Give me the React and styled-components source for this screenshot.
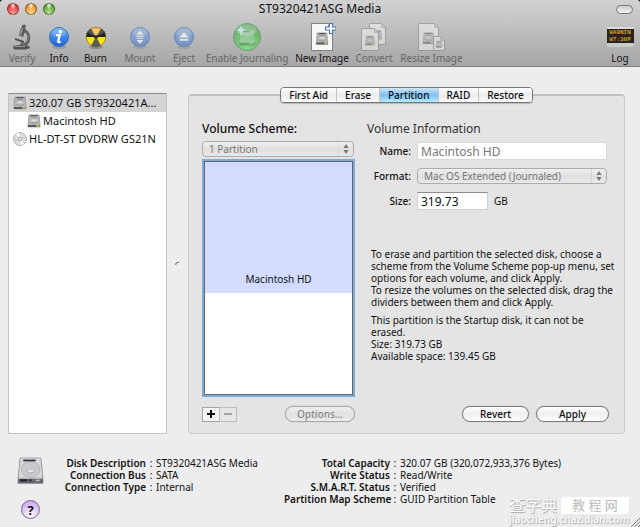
import { useState } from "react";
import styled, { createGlobalStyle, css } from "styled-components";

const TABS = ["First Aid", "Erase", "Partition", "RAID", "Restore"];

const DISK_INFO = [
  ["Disk Description", "ST9320421ASG Media"],
  ["Connection Bus", "SATA"],
  ["Connection Type", "Internal"]
];

const CAPACITY_INFO = [
  ["Total Capacity", "320.07 GB (320,072,933,376 Bytes)"],
  ["Write Status", "Read/Write"],
  ["S.M.A.R.T. Status", "Verified"],
  ["Partition Map Scheme", "GUID Partition Table"]
];

const VerifyIcon = () => (
  <svg width="20" height="26" viewBox="0 0 20 26">
    <path d="M10 1l3-.5 1 2-1 1.5 1 1-3 8-4-1.5 2-8 1-.5z" fill="#5c5c5c" />
    <path d="M10.5 4l-2 7" fill="none" stroke="#b0b0b0" />
    <path d="M13 7c5 3 5 10 0 14" fill="none" stroke="#5c5c5c" strokeWidth="3" />
    <path d="M14 8c3 3 3 8 0 11" fill="none" stroke="#8d8d8d" strokeWidth="0.8" />
    <path d="M3 14l9 3v2l-9-3z" fill="#4f4f4f" />
    <path d="M9 18l5 1-2 4H7z" fill="#6b6b6b" />
    <path d="M1 22l6-1 10 1 1 2-4 1.5H2z" fill="#515151" />
    <path d="M3 22.5h10" stroke="#999" />
  </svg>
);

const Ball = ({ id, top, bottom, children, faded }) => (
  <svg width="22" height="26" viewBox="0 0 22 26" opacity={faded ? 0.65 : 1}>
    <defs>
      <linearGradient id={id} x1="0" y1="0" x2="0" y2="1">
        <stop offset="0" stopColor={top} />
        <stop offset="1" stopColor={bottom} />
      </linearGradient>
    </defs>
    <ellipse cx="11" cy="23" rx="7" ry="2" fill="#0002" />
    <circle cx="11" cy="13" r="9.5" fill={`url(#${id})`} stroke="#3470bd" strokeWidth="1" />
    <ellipse cx="11" cy="8.5" rx="7" ry="4.5" fill="#fff" opacity="0.2" />
    {children}
  </svg>
);

const InfoIcon = () => (
  <Ball id="info" top="#62aef5" bottom="#1f62d4">
    <circle cx="12.4" cy="7.8" r="1.8" fill="#fff" />
    <path d="M8 11.2h3.6l-1.5 6.2c0 1 1.2 1 2.6.2" fill="none" stroke="#fff" strokeWidth="2.2" />
  </Ball>
);

const BurnIcon = () => (
  <svg width="22" height="26" viewBox="0 0 22 26">
    <ellipse cx="11" cy="23" rx="7" ry="2" fill="#0003" />
    <circle cx="11" cy="13" r="10" fill="#f7e414" />
    <path d="M11 13L6 4.3A10 10 0 0 0 1 13z" fill="#222" />
    <path d="M11 13l5-8.7a10 10 0 0 1 5 8.7z" fill="#222" />
    <path d="M11 13l5 8.7a10 10 0 0 1-10 0z" fill="#5c5c5c" />
    <path d="M11 13L6 4.3a10 10 0 0 1 10 0z" fill="#f3ae3c" />
    <circle cx="11" cy="13" r="2" fill="#333" />
    <ellipse cx="11" cy="7.5" rx="8" ry="4" fill="#fff" opacity="0.22" />
    <circle cx="11" cy="13" r="9.7" fill="none" stroke="#645d2b" strokeWidth="0.6" />
  </svg>
);

const MountIcon = () => (
  <Ball id="mount" top="#7fa8dc" bottom="#5480cd" faded>
    <path d="M11 6.5l3.5 4h-7zM11 20l3.5-4h-7zM7.5 11.8h7v1h-7zM7.5 13.8h7v1h-7z" fill="#fff" />
  </Ball>
);

const EjectIcon = () => (
  <Ball id="eject" top="#7fa8dc" bottom="#5480cd" faded>
    <path d="M11 8.5l5 5H6zM6.5 14.8h9v2h-9z" fill="#fff" />
  </Ball>
);

const DriveShape = ({ x = 0, y = 0, s = 1 }) => (
  <g transform={`translate(${x} ${y}) scale(${s})`}>
    <path d="M3 1h20l2 20v4H1v-4z" fill="#c5c5c8" stroke="#8c8c90" strokeWidth="0.8" />
    <path d="M3.5 1.5h19l1.5 18H2z" fill="#d9d9dc" />
    <ellipse cx="13" cy="12" rx="9" ry="7.5" fill="#cacace" stroke="#ababaf" strokeWidth="0.7" />
    <path d="M9 13c2 3 6 3 8 0" fill="#eee" stroke="#999" strokeWidth="0.8" />
    <path d="M6 2.5h12v1.7H6z" fill="#333" />
    <path d="M1 21h24v4.5H1z" fill="#68686f" />
    <path d="M3 22.5h7M12 22.5h2" stroke="#22242c" strokeWidth="2" />
    <path d="M18 22.5h4" stroke="#bbb" strokeWidth="1.5" />
  </g>
);

// at list and toolbar sizes the platter is only a few grey bands
const SmallDrive = ({ x = 0, y = 0, s = 1 }) => (
  <g transform={`translate(${x} ${y}) scale(${s})`}>
    <path d="M2 1h10l1 10v2H1v-2z" fill="#b9b9bc" stroke="#8a8a8c" strokeWidth="0.7" />
    <path d="M3.5 1.8h7" stroke="#444" strokeWidth="1.1" />
    <path d="M4 4.5c2-1.4 4-1.4 6 0M3.5 8.5c2 1.4 5 1.4 7 0" fill="none" stroke="#8f8f92" strokeWidth="0.9" />
    <path d="M4.5 6.4h5" stroke="#e2e2e4" strokeWidth="1.6" />
    <path d="M1 11h12v2H1z" fill="#5a5a5e" />
    <path d="M9.5 11.2h3v1.5h-3z" fill="#d9d541" />
  </g>
);

const DriveIcon = () => (
  <svg width="27" height="27" viewBox="0 0 26 26">
    <DriveShape />
  </svg>
);

const ListDriveIcon = () => (
  <svg width="14" height="14" viewBox="0 0 14 14">
    <SmallDrive />
  </svg>
);

const DiscIcon = () => (
  <svg width="14" height="14" viewBox="0 0 14 14">
    <circle cx="7" cy="7" r="6.5" fill="#dedede" stroke="#a2a2a2" strokeWidth="0.8" />
    <path d="M7 7L3 2l3-1zM7 7l4 5-3 1z" fill="#fff" />
    <path d="M7 7l6-3v3zM7 7l-6 3V7z" fill="#c8ced2" />
    <circle cx="7" cy="7" r="2.2" fill="#aaa" />
    <circle cx="7" cy="7" r="1.1" fill="#fff" />
  </svg>
);

const JournalIcon = () => (
  <svg width="28" height="28" viewBox="0 0 28 28">
    <defs>
      <radialGradient id="journal" cx="0.5" cy="0.85" r="0.8">
        <stop offset="0" stopColor="#83dc80" />
        <stop offset="1" stopColor="#6aab6e" />
      </radialGradient>
    </defs>
    <circle cx="14" cy="14" r="13.5" fill="url(#journal)" stroke="#6c9f70" />
    <g opacity="0.35"><DriveShape x={5.5} y={6} s={0.66} /></g>
    <ellipse cx="14" cy="7" rx="10" ry="6" fill="#fff" opacity="0.2" />
    <path d="M8 1l.7 5.3L14 7l-5.3.7L8 13l-.7-5.3L2 7l5.3-.7z" fill="#e2f8fb" />
    <path d="M5 4l6 6M11 4l-6 6" stroke="#b4e6ee" strokeWidth="0.7" />
  </svg>
);

const Sheet = ({ x, y, w, h, drive }) => (
  <g transform={`translate(${x} ${y})`}>
    <path d={`M.5.5h${w - 5}l4 4v${h - 5}H.5z`} fill="#f8f8f8" stroke="#777" strokeWidth="0.9" />
    <path d={`M${w - 4.5}.5v4h4z`} fill="#ccc" stroke="#888" strokeWidth="0.6" />
    <SmallDrive x={w * 0.5 - 7 * drive} y={h * 0.32} s={drive} />
  </g>
);

const NewImageIcon = () => (
  <svg width="28" height="28" viewBox="0 0 28 28">
    <Sheet x={3} y={0} w={22} h={28} drive={0.95} />
    <path d="M21 0h4v3.5h3v4h-3V11h-4V7.5h-4v-4h4z" fill="#4674b4" />
    <path d="M22 1h2v3.5h3.5v2H24V10h-2V6.500h-4v-2h4z" fill="#fff" />
  </svg>
);

const ConvertIcon = () => (
  <svg width="26" height="28" viewBox="0 0 26 28" opacity="0.5">
    <Sheet x={8} y={0} w={17} h={22} drive={0.7} />
    <Sheet x={0} y={5} w={18} h={23} drive={0.75} />
  </svg>
);

const ResizeIcon = () => (
  <svg width="28" height="28" viewBox="0 0 28 28" opacity="0.5">
    <Sheet x={0} y={0} w={21} h={28} drive={0.9} />
    <Sheet x={15} y={13} w={12} h={15} drive={0.5} />
  </svg>
);

const ArrowsIcon = () => (
  <svg width="6" height="10" viewBox="0 0 6 10">
    <path d="M3 0l2.5 4h-5zM3 10l2.5-4h-5z" fill="#777" />
  </svg>
);

const TOOLS = [
  { label: "Verify", width: 36, icon: <VerifyIcon />, disabled: true },
  { label: "Info", width: 38, icon: <InfoIcon /> },
  { label: "Burn", width: 35, icon: <BurnIcon /> },
  { label: "Mount", width: 54, icon: <MountIcon />, disabled: true },
  { label: "Eject", width: 34, icon: <EjectIcon />, disabled: true },
  { label: "Enable Journaling", width: 92, icon: <JournalIcon />, disabled: true },
  { label: "New Image", width: 58, icon: <NewImageIcon /> },
  { label: "Convert", width: 46, icon: <ConvertIcon />, disabled: true },
  { label: "Resize Image", width: 69, icon: <ResizeIcon />, disabled: true }
];

const PopUp = ({ id, label, value }) => (
  <SelectWrap>
    <Select id={id} aria-label={label} disabled>
      <option>{value}</option>
    </Select>
    <SelectArrows><ArrowsIcon /></SelectArrows>
  </SelectWrap>
);

const Info = ({ rows }) => (
  <InfoList>
    {rows.map(([name, value]) => (
      <InfoRow key={name}>
        <dt>{name}</dt>
        <Colon>:</Colon>
        <dd>{value}</dd>
      </InfoRow>
    ))}
  </InfoList>
);

const App = () => {
  const [tab, setTab] = useState("Partition");
  const [selected, setSelected] = useState(0);
  const [size, setSize] = useState("319.73");

  return (
    <>
      <GlobalStyle />
      <Window>
        <Header>
          <TitleBar>
            <Lights>
              <Light type="button" aria-label="Close" $color="#e0403d" $glow="#ff9b98" />
              <Light type="button" aria-label="Minimize" $color="#e6912f" $glow="#ffdf8d" />
              <Light type="button" aria-label="Zoom" $color="#5fa63b" $glow="#b9e78d" />
            </Lights>
            <Title>ST9320421ASG Media</Title>
            <ToolbarToggle type="button" aria-label="Toolbar" />
          </TitleBar>
          <Toolbar>
            {TOOLS.map((tool) => (
              <Tool key={tool.label} type="button" disabled={tool.disabled} $width={tool.width}>
                <ToolIcon>{tool.icon}</ToolIcon>
                {tool.label}
              </Tool>
            ))}
            <LogTool type="button" $width={40}>
              <ToolIcon>
                <LogScreen><span>WARNIN</span><span>W7:36P</span></LogScreen>
              </ToolIcon>
              Log
            </LogTool>
          </Toolbar>
        </Header>

        <Main>
          <DiskList>
            <li>
              <Disk type="button" $active={selected === 0} onClick={() => setSelected(0)}>
                <ListDriveIcon /><DiskName>320.07 GB ST9320421A...</DiskName>
              </Disk>
            </li>
            <li>
              <Disk type="button" $nested $active={selected === 1} onClick={() => setSelected(1)}>
                <ListDriveIcon /><DiskName>Macintosh HD</DiskName>
              </Disk>
            </li>
            <li>
              <Disk type="button" $active={selected === 2} onClick={() => setSelected(2)}>
                <DiscIcon /><DiskName>HL-DT-ST DVDRW GS21N</DiskName>
              </Disk>
            </li>
          </DiskList>
          <Splitter>
            <svg width="5" height="5" viewBox="0 0 5 5">
              <path d="M.7 4C.7 2 2 1 4 1.4" fill="none" stroke="#888" strokeWidth="1.2" />
            </svg>
          </Splitter>

          <Panel>
            <Tabs role="tablist">
              {TABS.map((name) => (
                <Tab key={name} type="button" role="tab" aria-selected={tab === name} $active={tab === name} onClick={() => setTab(name)}>
                  {name}
                </Tab>
              ))}
            </Tabs>
            <Columns>
              <Scheme>
                <Heading>Volume Scheme:</Heading>
                <PopUp label="Volume Scheme" value="1 Partition" />
                <PartitionMap>
                  <Used><UsedName>Macintosh HD</UsedName></Used>
                  <Free />
                </PartitionMap>
                <Actions $between>
                  <Squares>
                    <Square type="button" aria-label="Add">
                      <svg width="8" height="8" viewBox="0 0 8 8"><path d="M4 0v8M0 4h8" stroke="#111" strokeWidth="2" /></svg>
                    </Square>
                    <Square type="button" aria-label="Remove" disabled>
                      <svg width="8" height="8" viewBox="0 0 8 8"><path d="M0 4h8" stroke="#888" strokeWidth="1.4" /></svg>
                    </Square>
                  </Squares>
                  <Pill type="button" disabled $width={70}>Options...</Pill>
                </Actions>
              </Scheme>

              <Details>
                <Heading $light>Volume Information</Heading>
                <Fields>
                  <label htmlFor="name">Name:</label>
                  <Input id="name" type="text" value="Macintosh HD" disabled />
                  <label htmlFor="format">Format:</label>
                  <PopUp id="format" value="Mac OS Extended (Journaled)" />
                  <label htmlFor="size">Size:</label>
                  <SizeField>
                    <Input id="size" type="text" $short value={size} onChange={(e) => setSize(e.target.value)} />
                    GB
                  </SizeField>
                </Fields>
                <Help>
                  <p>
                    To erase and partition the selected disk, choose a<br />
                    scheme from the Volume Scheme pop-up menu, set<br />
                    options for each volume, and click Apply.<br />
                    To resize the volumes on the selected disk, drag the<br />
                    dividers between them and click Apply.
                  </p>
                  <p>
                    This partition is the Startup disk, it can not be<br />
                    erased.<br />
                    Size: 319.73 GB<br />
                    Available space: 139.45 GB
                  </p>
                </Help>
                <Actions>
                  <Pill type="button" $width={67}>Revert</Pill>
                  <Pill type="button" $width={73}>Apply</Pill>
                </Actions>
              </Details>
            </Columns>
          </Panel>
        </Main>

        <Footer>
          <FooterIcons>
            <DriveIcon />
            <HelpButton type="button" aria-label="Help">?</HelpButton>
          </FooterIcons>
          <Info rows={DISK_INFO} />
          <Info rows={CAPACITY_INFO} />
        </Footer>

        <Watermark>
          <Brand>查字典<BrandTag>教 程 网</BrandTag></Brand>
          <Site>jiaocheng.chazidian.com</Site>
        </Watermark>
        <Grip>
          <svg width="9" height="9" viewBox="0 0 9 9">
            <path d="M0 9l9-9M3.5 9L9 3.5M7 9l2-2" stroke="#777" strokeWidth="1" />
          </svg>
        </Grip>
      </Window>
    </>
  );
};

export default App;


const GlobalStyle = createGlobalStyle`
  * {
    box-sizing: border-box;
  }

  body {
    margin: 0;
    background-color: #222;
    font-family: "Noto Sans", "Noto Sans CJK SC", sans-serif;
    font-size: 10px;
    line-height: 12px;
    color: #111;
  }

  button, input, select {
    margin: 0;
    font: inherit;
    color: inherit;
  }

  svg {
    display: block;
    flex: none;
  }

  ul, dl, dd, p, h1, h2 {
    margin: 0;
    padding: 0;
  }
`;

const Window = styled.div`
  min-height: 100vh;
  position: relative;
  display: flex;
  flex-direction: column;
  overflow: hidden;
  border-radius: 4px 4px 0 0;
  background-color: #ededed;
`;

const Header = styled.header`
  height: 67px;
  border-bottom: 1px solid #7d7d7d;
  background: linear-gradient(#d2d2d2, #a6a6a6);
`;

const TitleBar = styled.div`
  height: 18px;
  padding: 0 7px;
  display: grid;
  grid-template-columns: 1fr auto 1fr;
  align-items: center;
`;

const Lights = styled.div`
  display: flex;
  gap: 6px;
`;

const Light = styled.button`
  width: 12px;
  height: 12px;
  padding: 0;
  border: 1px solid #0006;
  border-radius: 50%;
  background: radial-gradient(ellipse at 50% 15%, #fff 0, transparent 35%), radial-gradient(circle at 50% 90%, ${({ $glow }) => $glow}, ${({ $color }) => $color} 70%);
`;

const Title = styled.h1`
  font-size: 12px;
  font-weight: 400;
  line-height: 18px;
`;

const ToolbarToggle = styled.button`
  width: 17px;
  height: 9px;
  padding: 0;
  justify-self: end;
  border: 1px solid #777;
  border-radius: 5px;
  background: linear-gradient(#ccc, #f4f4f4);
`;

const Toolbar = styled.div`
  padding-left: 4px;
  display: flex;
`;

const Tool = styled.button`
  flex: none;
  width: ${({ $width }) => $width}px;
  padding: 4px 0 0;
  border: 0;
  background: none;
  white-space: nowrap;
  display: flex;
  flex-direction: column;
  align-items: center;

  &:disabled {
    color: #666;
  }
`;

const LogTool = styled(Tool)`
  margin-left: auto;
`;

const ToolIcon = styled.span`
  height: 30px;
  display: flex;
  align-items: center;
`;

const LogScreen = styled.span`
  width: 27px;
  height: 20px;
  display: flex;
  flex-direction: column;
  align-items: center;
  border-top: 2px solid #ddd;
  border-bottom: 4px solid #c9c9c9;
  border-radius: 2px;
  background-color: #29251e;
  color: #d49a2a;
  font-family: "Liberation Mono", monospace;
  font-size: 6px;
  font-weight: 700;
  line-height: 7px;
`;

const Main = styled.main`
  flex: 1;
  padding: 26px 15px 0 8px;
  display: flex;
`;

const DiskList = styled.ul`
  flex: none;
  width: 159px;
  list-style: none;
  border: 1px solid #c4c4c4;
  border-top-color: #8c8c8c;
  background-color: #fff;
`;

const Disk = styled.button`
  width: 100%;
  height: 18px;
  padding: 0 4px;
  padding-left: ${({ $nested }) => ($nested ? 18 : 4)}px;
  display: flex;
  align-items: center;
  gap: 2px;
  border: 0;
  background-color: ${({ $active }) => ($active ? "#d4d4d4" : "transparent")};
  text-align: left;
  font-size: 11px;
`;

const DiskName = styled.span`
  white-space: nowrap;
`;

const Splitter = styled.div`
  flex: none;
  width: 21px;
  display: flex;
  align-items: center;
  justify-content: center;
`;

const Panel = styled.section`
  flex: 1;
  min-width: 0;
  margin-top: 1px;
  display: flex;
  flex-direction: column;
  border: 1px solid #cacaca;
  border-top: 2px solid #c2c2c2;
  border-radius: 4px;
  background-color: #e4e4e4;
`;

const Tabs = styled.div`
  margin-top: -9px;
  align-self: center;
  display: flex;
  overflow: hidden;
  border: 1px solid #777;
  border-radius: 4px;
  box-shadow: 0 1px 1px #0003;
`;

const Tab = styled.button`
  height: 14px;
  padding: 0 8px;
  border: 0;
  background: linear-gradient(#fff, #ececec 50%, #f9f9f9);
  font-weight: 500;
  line-height: 14px;

  & + & {
    border-left: 1px solid #c4c4c4;
  }

  ${({ $active }) => $active && css`
    background: linear-gradient(#cfe6fb, #7fc0f5 50%, #b5ecff);
  `}
`;

const Columns = styled.div`
  flex: 1;
  padding: 18px 17px 11px 13px;
  display: flex;
  gap: 13px;
`;

const Scheme = styled.div`
  flex: 0 0 152px;
  display: flex;
  flex-direction: column;
`;

const Details = styled.div`
  flex: 1;
  min-width: 0;
  display: flex;
  flex-direction: column;
`;

const Heading = styled.h2`
  margin-bottom: 4px;
  font-size: 12px;
  font-weight: ${({ $light }) => ($light ? 400 : 500)};
  line-height: 16px;
  color: ${({ $light }) => ($light ? "#333" : "#111")};
`;

const SelectWrap = styled.div`
  position: relative;
`;

const Select = styled.select`
  width: 100%;
  height: 16px;
  padding: 0 18px 0 6px;
  display: block;
  appearance: none;
  border: 1px solid #acacac;
  border-radius: 4px;
  background: linear-gradient(#efefef, #e0e0e0 50%, #e9e9e9);
  line-height: 14px;

  &:disabled {
    color: #777;
    opacity: 1;
  }
`;

const SelectArrows = styled.span`
  position: absolute;
  top: 1px;
  right: 1px;
  height: 14px;
  padding: 2px 4px;
  border-left: 1px solid #d6d6d6;
  pointer-events: none;
`;

const PartitionMap = styled.div`
  flex: 1;
  margin: 4px 1px 0 2px;
  display: flex;
  flex-direction: column;
  border: 1px solid #666;
  box-shadow: 0 0 0 2px #7dabd9;
`;

const Used = styled.div`
  flex: 564 0 0;
  display: flex;
  align-items: flex-end;
  justify-content: center;
  background-color: #d3dcff;
`;

const UsedName = styled.span`
  margin-bottom: 8px;
`;

const Free = styled.div`
  flex: 436 0 0;
  background-color: #fff;
`;

const Actions = styled.div`
  margin-top: 11px;
  margin-right: ${({ $between }) => ($between ? -1 : -2)}px;
  display: flex;
  align-items: center;
  gap: 7px;
  justify-content: ${({ $between }) => ($between ? "space-between" : "flex-end")};
`;

const Squares = styled.div`
  display: flex;
`;

const Square = styled.button`
  width: 18px;
  height: 15px;
  padding: 0;
  display: flex;
  align-items: center;
  justify-content: center;
  border: 1px solid #a5a5a5;
  background-color: #f4f4f4;

  &:disabled {
    margin-left: -1px;
    border-color: #bdbdbd;
    background-color: #e6e6e6;
  }
`;

const Pill = styled.button`
  width: ${({ $width }) => $width}px;
  height: 16px;
  padding: 0;
  border: 1px solid #7c7c7c;
  border-radius: 8px;
  background: linear-gradient(#fff, #efefef 50%, #fff);
  box-shadow: 0 0 1px #0006;
  font-weight: 500;
  line-height: 14px;

  &:disabled {
    border-color: #a9a9a9;
    background: linear-gradient(#eee, #e2e2e2 50%, #ececec);
    color: #888;
  }
`;

const Fields = styled.div`
  padding-top: 1px;
  display: grid;
  grid-template-columns: 44px 1fr;
  column-gap: 6px;
  row-gap: 8px;
  align-items: center;

  label {
    text-align: right;
    font-weight: 500;
  }
`;

const Input = styled.input`
  width: ${({ $short }) => ($short ? "71px" : "100%")};
  height: 18px;
  padding: 0 3px;
  border: 1px solid #d0d0d0;
  border-top-color: #8d8d8d;
  background-color: #fff;
  font-size: 12px;

  &:disabled {
    border-color: #d8d8d8;
    color: #777;
  }
`;

const SizeField = styled.div`
  display: flex;
  align-items: center;
  gap: 6px;
`;

const Help = styled.div`
  flex: 1;
  padding-top: 38px;
  padding-left: 4px;
  white-space: nowrap;

  p + p {
    margin-top: 6px;
  }
`;

const Footer = styled.footer`
  height: 93px;
  padding: 23px 16px 0 17px;
  display: flex;
  align-items: flex-start;
`;

const FooterIcons = styled.div`
  flex: none;
  width: 47px;
  display: flex;
  flex-direction: column;
  gap: 16px;
`;

const HelpButton = styled.button`
  width: 19px;
  height: 19px;
  margin-left: 4px;
  padding: 0;
  border: 1px solid #76688d;
  border-radius: 50%;
  background: radial-gradient(circle at 50% 85%, #fff, #cfb0f4 75%);
  font-size: 13px;
  font-weight: 700;
  line-height: 16px;
`;

const InfoList = styled.dl`
  white-space: nowrap;

  & + & {
    margin-left: 26px;
  }
`;

const InfoRow = styled.div`
  display: grid;
  grid-template-columns: 82px 10px 1fr;
  line-height: 12px;

  ${InfoList} + ${InfoList} & {
    grid-template-columns: 106px 10px 1fr;
  }

  dt {
    text-align: right;
    font-weight: 600;
  }
`;

const Colon = styled.span`
  text-align: center;
`;

const Watermark = styled.div`
  position: absolute;
  right: 11px;
  bottom: 2px;
  color: #fff;
  text-shadow: 1px 1px 1px #aaa, 0 0 1px #bbb;
`;

const Brand = styled.div`
  display: flex;
  align-items: center;
  gap: 4px;
  font-size: 16px;
  line-height: 17px;
`;

const BrandTag = styled.span`
  flex: 1;
  text-align: center;
  border-radius: 4px 0 4px 0;
  background-color: #fff;
  color: #bbb;
  text-shadow: none;
  font-size: 13px;
`;

const Site = styled.div`
  font-size: 10px;
  font-weight: 600;
  line-height: 11px;
`;

const Grip = styled.div`
  position: absolute;
  right: 0;
  bottom: 0;
`;
